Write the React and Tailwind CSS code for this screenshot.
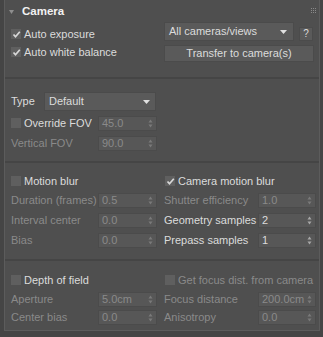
import React from "react";

const EN = "text-[#dcdcdc]";
const DIS = "text-[#8a8a8a]";

function Check({ checked, label, dim }) {
  return (
    <div className="flex items-center h-full">
      <div className="w-[10px] h-[10px] bg-[#5f5f5f] flex items-center justify-center shrink-0">
        {checked && (
          <svg width="9" height="9" viewBox="0 0 9 9">
            <path d="M1.5 4.5 L3.5 6.8 L7.8 1.8" stroke="#d8d8d8" strokeWidth="1.7" fill="none" />
          </svg>
        )}
      </div>
      <span className={"ml-[3px] whitespace-nowrap " + (dim ? DIS : EN)}>{label}</span>
    </div>
  );
}

function Spinner({ value, dim, w = "w-[59px]" }) {
  return (
    <div className={w + " h-[15px] bg-[#575757] border border-[#4b4b4b] flex items-center justify-between pl-[3px] pr-[3px]"}>
      <span className={dim ? DIS : EN}>{value}</span>
      <svg width="5" height="9" viewBox="0 0 5 9">
        <path d="M2.5 0.5 L4.5 3.5 L0.5 3.5 Z" fill={dim ? "#7a7a7a" : "#a8a8a8"} />
        <path d="M0.5 5.5 L4.5 5.5 L2.5 8.5 Z" fill={dim ? "#7a7a7a" : "#a8a8a8"} />
      </svg>
    </div>
  );
}

function Row({ label, value, dim, labelDim, w, h = "h-[20px]" }) {
  return (
    <div className={"flex items-center justify-between " + h}>
      <span className={"whitespace-nowrap " + (labelDim ?? dim ? DIS : EN)}>{label}</span>
      <Spinner value={value} dim={dim} w={w} />
    </div>
  );
}

function Sep() {
  return <div className="h-[2px] bg-[#454545]" />;
}

function DownTri({ color = "#e0e0e0" }) {
  return (
    <svg width="7" height="4" viewBox="0 0 7 4">
      <path d="M0 0 L7 0 L3.5 4 Z" fill={color} />
    </svg>
  );
}

export default function App() {
  return (
    <div className="w-[323px] h-[337px] bg-[#454545] pl-[4px] font-['Liberation_Sans',Arial,sans-serif] text-[11px] leading-none">
      <div className="w-[316px] h-[331px] bg-[#4f4f4f] border-x border-b border-[#5c5c5c]">
        {/* Section 1 */}
        <div className="h-[77px] pt-[4px]">
          <div className="h-[16px] flex items-center pl-[4px] pr-[3px]">
            <svg width="5" height="4" viewBox="0 0 5 4" className="mt-[-1px]">
              <path d="M0 0 L5 0 L2.5 4 Z" fill="#8e8e8e" />
            </svg>
            <span className="ml-[8px] font-bold text-[#f2f2f2] text-[11.5px]">Camera</span>
            <div className="ml-auto self-start mt-[4px] grid grid-cols-3 gap-[1px]">
              {Array.from({ length: 9 }).map((_, i) => (
                <div key={i} className="w-[1px] h-[1px] bg-[#8a8a8a]" />
              ))}
            </div>
          </div>
          <div className="flex">
            <div className="w-[146px] ml-[6px] pt-[5px]">
              <div className="h-[18px]"><Check checked label="Auto exposure" /></div>
              <div className="h-[18px]"><Check checked label="Auto white balance" /></div>
            </div>
            <div className="ml-[7px] pt-[2px]">
              <div className="flex items-end">
                <div className="w-[130px] h-[19px] bg-[#5a5a5a] border border-[#4b4b4b] flex items-center justify-between pl-[4px] pr-[6px]">
                  <span className={EN}>All cameras/views</span>
                  <DownTri />
                </div>
                <div className="ml-[5px] w-[14px] h-[14px] bg-[#5a5a5a] border border-[#4b4b4b] flex items-center justify-center text-[#dcdcdc] text-[10px]">?</div>
              </div>
              <div className="mt-[4px] w-[150px] h-[17px] bg-[#5a5a5a] border border-[#4b4b4b] flex items-center justify-center text-[#dcdcdc]">
                Transfer to camera(s)
              </div>
            </div>
          </div>
        </div>
        <Sep />
        {/* Section 2 */}
        <div className="h-[82px] pt-[13px] pl-[6px]">
          <div className="flex items-center h-[19px] w-[146px]">
            <span className={"w-[33px] " + EN}>Type</span>
            <div className="w-[112px] h-[19px] bg-[#5a5a5a] border border-[#4b4b4b] flex items-center justify-between pl-[4px] pr-[5px]">
              <span className={EN}>Default</span>
              <DownTri />
            </div>
          </div>
          <div className="w-[146px] mt-[2px]">
            <div className="flex items-center justify-between h-[20px]">
              <Check label="Override FOV" />
              <Spinner value="45.0" dim />
            </div>
            <Row label="Vertical FOV" value="90.0" dim />
          </div>
        </div>
        <Sep />
        {/* Section 3 */}
        <div className="h-[96px] pt-[9px] flex">
          <div className="w-[146px] ml-[6px]">
            <div className="h-[18px]"><Check label="Motion blur" /></div>
            <Row label="Duration (frames)" value="0.5" dim />
            <Row label="Interval center" value="0.0" dim />
            <Row label="Bias" value="0.0" dim />
          </div>
          <div className="w-[152px] ml-[7px]">
            <div className="h-[18px] pl-[1px]"><Check checked label="Camera motion blur" /></div>
            <Row label="Shutter efficiency" value="1.0" dim w="w-[58px]" />
            <Row label="Geometry samples" value="2" w="w-[58px]" />
            <Row label="Prepass samples" value="1" w="w-[58px]" />
          </div>
        </div>
        <Sep />
        {/* Section 4 */}
        <div className="pt-[9px] flex">
          <div className="w-[146px] ml-[6px]">
            <div className="h-[20px]"><Check label="Depth of field" /></div>
            <Row label="Aperture" value="5.0cm" dim h="h-[18px]" />
            <Row label="Center bias" value="0.0" dim h="h-[18px]" />
          </div>
          <div className="w-[152px] ml-[7px]">
            <div className="h-[20px] pl-[1px]"><Check label="Get focus dist. from camera" dim /></div>
            <Row label="Focus distance" value="200.0cm" dim h="h-[18px]" w="w-[58px]" />
            <Row label="Anisotropy" value="0.0" dim h="h-[18px]" w="w-[58px]" />
          </div>
        </div>
      </div>
    </div>
  );
}
